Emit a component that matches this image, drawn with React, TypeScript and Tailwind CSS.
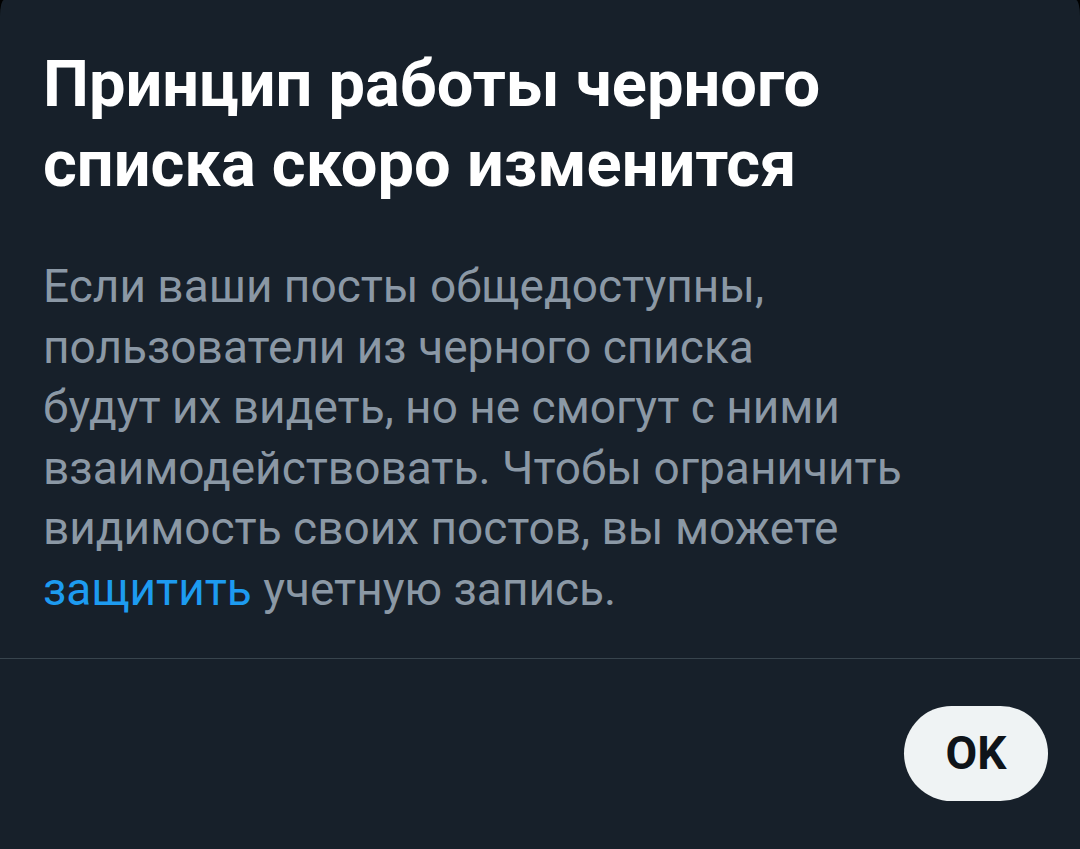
export default function App() {
  return (
    <div className="min-h-screen bg-black" style={{ fontFamily: 'Roboto, "Noto Sans", sans-serif' }}>
      <div className="min-h-[849px] w-[1080px] rounded-tl-[4px_16px] rounded-tr-[4px_16px] bg-[#17202a] flex flex-col">
        {/* Heading and message */}
        <div className="px-[43px] pt-[44px] pb-[39px]">
          <h1 className="text-[65px] leading-[80px] font-bold text-white">
            Принцип работы черного
            <br />
            списка скоро изменится
          </h1>
          <p className="mt-[52px] text-[46px] leading-[60.5px] text-[#8b98a5] w-[980px]">
            Если ваши посты общедоступны,
            <br />
            пользователи из черного списка
            <br />
            будут их видеть, но не смогут с ними
            <br />
            взаимодействовать. Чтобы ограничить
            <br />
            видимость своих постов, вы можете
            <br />
            <a className="text-[#1d9bf0]">защитить</a> учетную запись.
          </p>
        </div>

        <div className="h-px bg-[#38444d]" />

        {/* Actions */}
        <div className="flex justify-end px-[32px] pt-[47px]">
          <button className="h-[95px] w-[144px] rounded-full bg-[#eff3f4] text-[46px] font-bold text-[#0f1419]">
            OK
          </button>
        </div>
      </div>
    </div>
  );
}
